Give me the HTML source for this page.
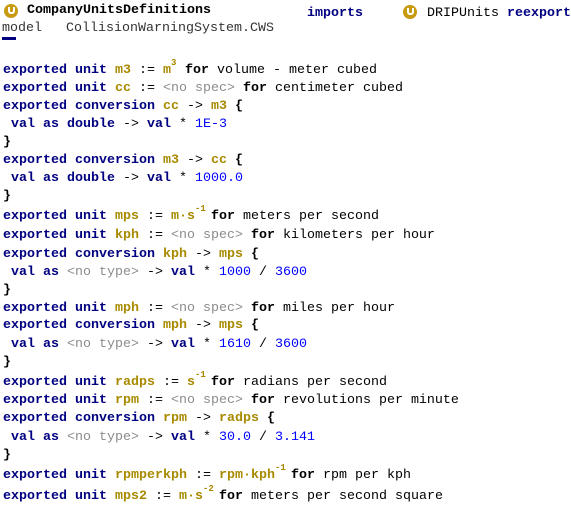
<!DOCTYPE html><html><head><style>
body{margin:0;width:571px;height:506px;background:#fff;overflow:hidden;position:relative;font-family:"Liberation Mono",monospace;font-size:13.33px;color:#000}
.l{position:absolute;left:3px;white-space:pre;line-height:18px;height:18px}
.k{color:#000080;font-weight:bold}
.g{color:#a88a00;font-weight:bold}
.b{font-weight:bold}
.n{color:#8c8c8c}
.d{color:#0000ff}
.s{display:inline-block;position:relative;top:-8px;font-size:9px;color:#a88a00;font-weight:bold;width:8px;text-align:left;line-height:9px}
.ic{position:absolute;width:14px;height:14px;border-radius:50%;background:#c89a10}
.ic:after{content:"";position:absolute;left:4px;top:3px;width:3px;height:5px;border:2px solid #fff;border-top:none;border-radius:0 0 3px 3px}
</style></head><body>
<div class="ic" style="left:4px;top:4px"></div>
<div class="l b" style="left:27px;top:2px">CompanyUnitsDefinitions</div>
<div class="l k" style="left:307px;top:5px">imports</div>
<div class="ic" style="left:403px;top:5px"></div>
<div class="l" style="left:427px;top:5px">DRIPUnits <span class="k">reexport</span></div>
<div class="l" style="left:2px;top:20px;color:#333">model   CollisionWarningSystem.CWS</div>
<div style="position:absolute;left:2px;top:37px;width:14px;height:3px;background:#000080"></div>

<div class="l" style="top:62px"><span class="k">exported unit</span> <span class="g">m3</span> := <span class="g">m</span><span class="s" style="width:14px">3</span><span class="b">for</span> volume - meter cubed</div>
<div class="l" style="top:80px"><span class="k">exported unit</span> <span class="g">cc</span> := <span class="n">&lt;no spec&gt;</span> <span class="b">for</span> centimeter cubed</div>
<div class="l" style="top:98px"><span class="k">exported conversion</span> <span class="g">cc</span> -&gt; <span class="g">m3</span> <span class="b">{</span></div>
<div class="l" style="top:116px"> <span class="k">val as double</span> -&gt; <span class="k">val</span> * <span class="d">1E-3</span></div>
<div class="l b" style="top:134px">}</div>
<div class="l" style="top:152px"><span class="k">exported conversion</span> <span class="g">m3</span> -&gt; <span class="g">cc</span> <span class="b">{</span></div>
<div class="l" style="top:170px"> <span class="k">val as double</span> -&gt; <span class="k">val</span> * <span class="d">1000.0</span></div>
<div class="l b" style="top:188px">}</div>
<div class="l" style="top:208px"><span class="k">exported unit</span> <span class="g">mps</span> := <span class="g">m·s</span><span class="s" style="width:16px">-1</span><span class="b">for</span> meters per second</div>
<div class="l" style="top:227px"><span class="k">exported unit</span> <span class="g">kph</span> := <span class="n">&lt;no spec&gt;</span> <span class="b">for</span> kilometers per hour</div>
<div class="l" style="top:246px"><span class="k">exported conversion</span> <span class="g">kph</span> -&gt; <span class="g">mps</span> <span class="b">{</span></div>
<div class="l" style="top:264px"> <span class="k">val as</span> <span class="n">&lt;no type&gt;</span> -&gt; <span class="k">val</span> * <span class="d">1000</span> / <span class="d">3600</span></div>
<div class="l b" style="top:282px">}</div>
<div class="l" style="top:300px"><span class="k">exported unit</span> <span class="g">mph</span> := <span class="n">&lt;no spec&gt;</span> <span class="b">for</span> miles per hour</div>
<div class="l" style="top:317px"><span class="k">exported conversion</span> <span class="g">mph</span> -&gt; <span class="g">mps</span> <span class="b">{</span></div>
<div class="l" style="top:336px"> <span class="k">val as</span> <span class="n">&lt;no type&gt;</span> -&gt; <span class="k">val</span> * <span class="d">1610</span> / <span class="d">3600</span></div>
<div class="l b" style="top:354px">}</div>
<div class="l" style="top:374px"><span class="k">exported unit</span> <span class="g">radps</span> := <span class="g">s</span><span class="s" style="width:16px">-1</span><span class="b">for</span> radians per second</div>
<div class="l" style="top:392px"><span class="k">exported unit</span> <span class="g">rpm</span> := <span class="n">&lt;no spec&gt;</span> <span class="b">for</span> revolutions per minute</div>
<div class="l" style="top:410px"><span class="k">exported conversion</span> <span class="g">rpm</span> -&gt; <span class="g">radps</span> <span class="b">{</span></div>
<div class="l" style="top:429px"> <span class="k">val as</span> <span class="n">&lt;no type&gt;</span> -&gt; <span class="k">val</span> * <span class="d">30.0</span> / <span class="d">3.141</span></div>
<div class="l b" style="top:447px">}</div>
<div class="l" style="top:467px"><span class="k">exported unit</span> <span class="g">rpmperkph</span> := <span class="g">rpm·kph</span><span class="s" style="width:16px">-1</span><span class="b">for</span> rpm per kph</div>
<div class="l" style="top:488px"><span class="k">exported unit</span> <span class="g">mps2</span> := <span class="g">m·s</span><span class="s" style="width:16px">-2</span><span class="b">for</span> meters per second square</div>
</body></html>
